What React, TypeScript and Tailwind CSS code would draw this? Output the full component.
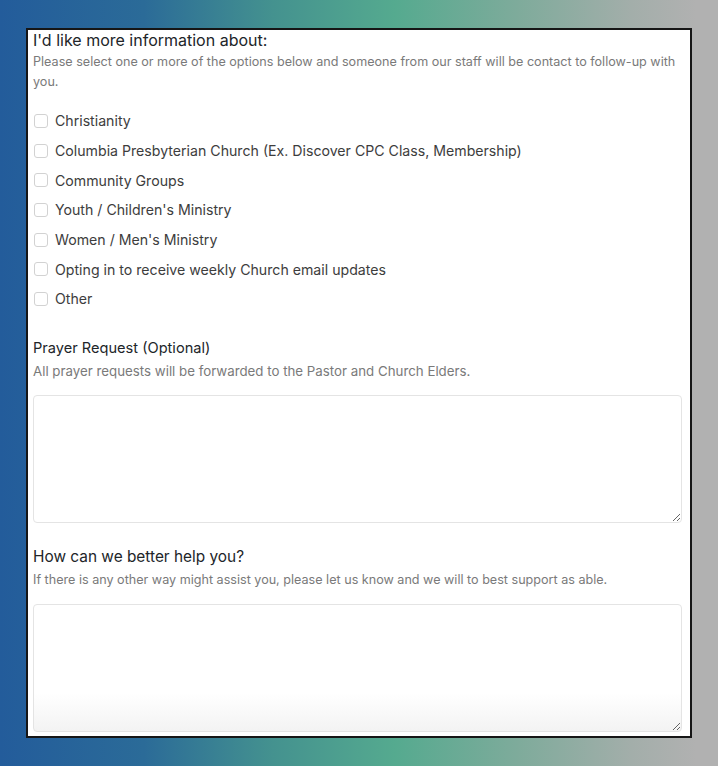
import React from "react";

const options = [
  "Christianity",
  "Columbia Presbyterian Church (Ex. Discover CPC Class, Membership)",
  "Community Groups",
  "Youth / Children's Ministry",
  "Women / Men's Ministry",
  "Opting in to receive weekly Church email updates",
  "Other",
];

const App: React.FC = () => {
  return (
    <div
      className="w-[718px] h-[766px] pt-[28px] pl-[26px] bg-[linear-gradient(to_right,#235c9b_0%,#2b6b98_20%,#44928f_38%,#55aa8f_55%,#7eab9b_72%,#a3aeaa_88%,#b1b1b1_97%)]"
      style={{ fontFamily: "Inter, 'Noto Sans', sans-serif" }}
    >
      <div className="w-[666px] h-[710px] bg-white border-2 border-[#161616] pl-[5px] pr-[8px] flex flex-col">
        <h2 className="text-[16px] leading-[20px] text-[#212529]">
          I'd like more information about:
        </h2>
        <p className="text-[12.6px] leading-[20px] text-[#7a7a7a] mt-[2px] pr-[2px]">
          Please select one or more of the options below and someone from our staff will be contact to follow-up with
          you.
        </p>

        <div className="mt-[14px] flex flex-col">
          {options.map((opt) => (
            <label key={opt} className="h-[29.7px] flex items-center gap-[7px] text-[14.15px] text-[#3d3d3d]">
              <input
                type="checkbox"
                className="appearance-none ml-[1px] w-[14px] h-[14px] border border-[#d2d2d2] rounded-[3px] bg-white shrink-0"
              />
              <span>{opt}</span>
            </label>
          ))}
        </div>

        <h3 className="mt-[24px] text-[14.6px] leading-[20px] text-[#212529]">Prayer Request (Optional)</h3>
        <p className="mt-[3px] text-[13.3px] leading-[20px] text-[#7a7a7a]">
          All prayer requests will be forwarded to the Pastor and Church Elders.
        </p>
        <textarea className="mt-[14px] w-[649px] h-[128px] shrink-0 border border-[#e4e4e4] rounded-[4px] bg-white outline-none" />

        <h3 className="mt-[24px] text-[15.4px] leading-[20px] text-[#212529]">How can we better help you?</h3>
        <p className="mt-[3px] text-[12.6px] leading-[20px] text-[#7a7a7a]">
          If there is any other way might assist you, please let us know and we will to best support as able.
        </p>
        <textarea className="mt-[14px] w-[649px] h-[128px] shrink-0 border border-[#e4e4e4] rounded-[4px] outline-none bg-[linear-gradient(to_bottom,#ffffff_70%,#f3f3f3)]" />
      </div>
    </div>
  );
};

export default App;
